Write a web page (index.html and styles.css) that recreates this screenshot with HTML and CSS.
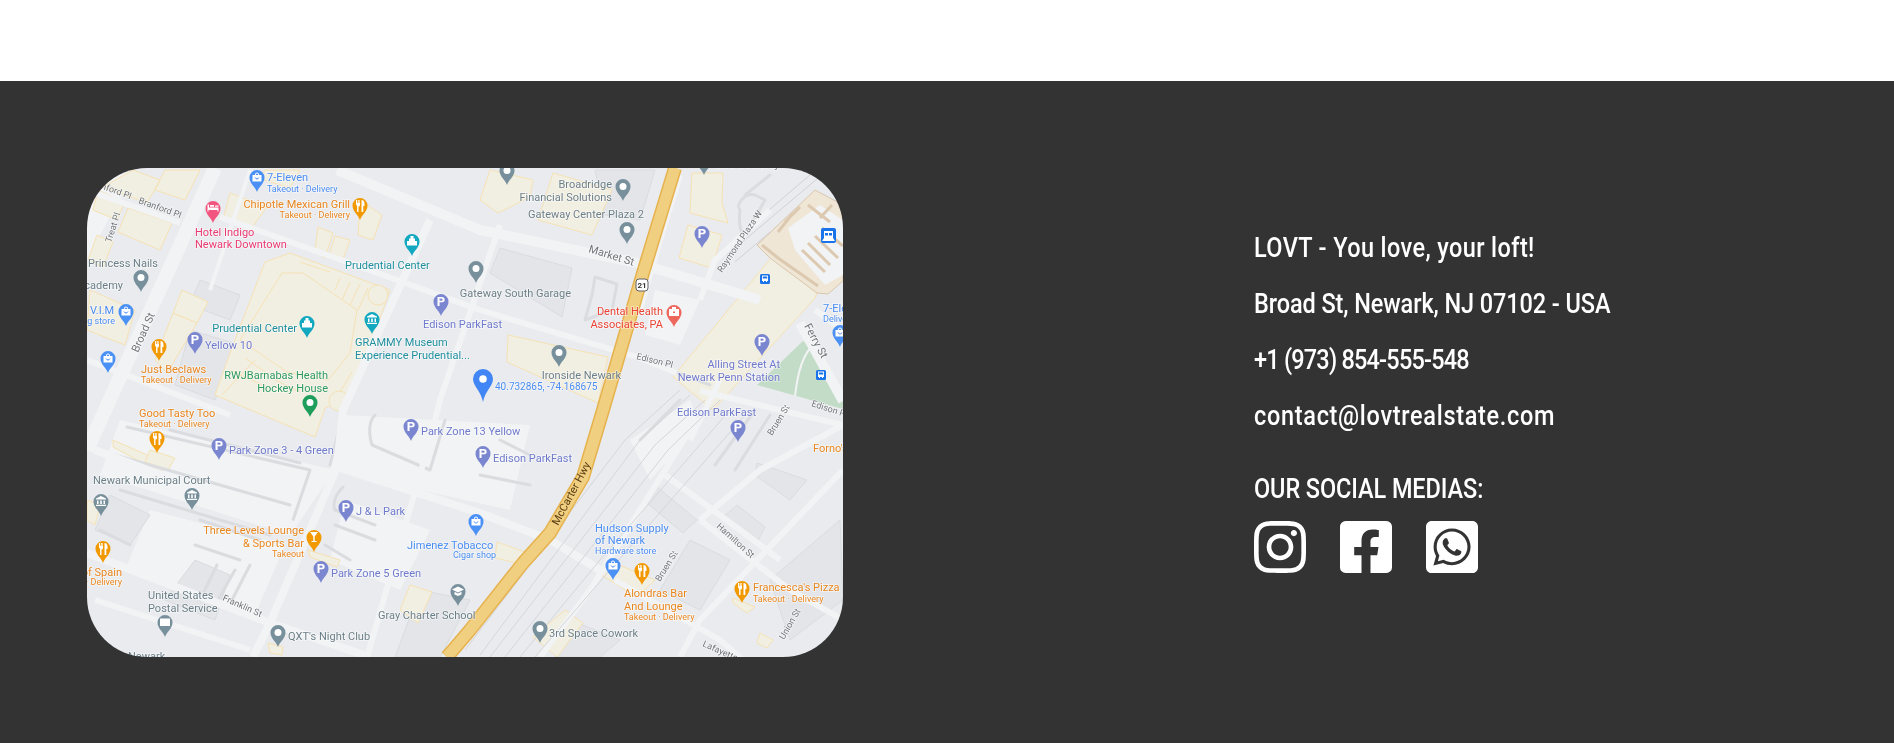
FILE: index.html
```html
<!DOCTYPE html>
<html lang="en">
<head>
<meta charset="utf-8">
<title>LOVT - Contact</title>
<link rel="stylesheet" href="styles.css">
</head>
<body>
<div class="top-space"></div>
<footer class="footer">
  <div class="map">
    <svg class="map-svg" viewBox="87 168 756 489" width="756" height="489" role="img" aria-label="Map of Newark">
      <defs>
        <path id="tear" d="M0 0C-1.500-5-7.500-8.500-7.500-14.500A7.500 7.500 0 1 1 7.500-14.500C7.500-8.500 1.500-5 0 0Z"/>
        <g id="i-dot"><use href="#tear"/><circle class="w" cx="0" cy="-14.500" r="3.500"/></g>
        <g id="i-park"><use href="#tear"/><text class="w pk" x="0" y="-10">P</text></g>
        <g id="i-fork"><use href="#tear"/><path class="w" d="M-4-20h1v3h.7v-3h1v3h.7v-3h.6v5c0 1-.8 1.500-1.500 1.600V-8h-1.400v-6.400C-3.400-14.500-4-15-4-16ZM1.500-20c2 0 3 1.500 3 4v2H3.300v6H1.500Z"/></g>
        <g id="i-bag"><use href="#tear"/><path class="w" d="M-4.500-17H-2.200C-2-20.500 2-20.500 2.200-17H4.500V-10.500H-4.500ZM-1.200-17H1.200C1-19 -1-19 -1.200-17Z"/><path class="st" d="M-2-14.500C-1-12.500 1-12.500 2-14.500"/></g>
        <g id="i-bank"><use href="#tear"/><path class="w" d="M0-20L5-17.500V-16.500H-5V-17.500ZM-4-15.500H-2.500V-12H-4ZM-.8-15.500H.8V-12H-.8ZM2.500-15.500H4V-12H2.500ZM-5-11.200H5V-10H-5Z"/></g>
        <g id="i-tower"><use href="#tear"/><path class="w" d="M-1.500-20H1.500V-17.500H3V-15H5V-10.500H-5V-15H-3V-17.500H-1.500Z"/></g>
        <g id="i-glass"><use href="#tear"/><path class="w" d="M-4-20H4L.7-15.500V-11H2.500V-10H-2.500V-11H-.7V-15.500Z"/></g>
        <g id="i-mail"><use href="#tear"/><path class="w" d="M-5-18.500H5V-11H-5Z"/></g>
        <g id="i-cap"><use href="#tear"/><path class="w" d="M0-19.500L6-16.500 0-13.500-6-16.500ZM-3.500-14.200L0-12.500 3.500-14.200V-11.500L0-10-3.500-11.500Z"/></g>
        <g id="i-bed"><use href="#tear"/><path class="w" d="M-5.500-18.500H-4V-15.500H5.500V-11.500H4.500V-13H-4.500V-11.500H-5.500ZM-3-18H1V-16.200H-3ZM2-17.500H5.500V-16.200H2Z"/></g>
        <g id="i-med"><use href="#tear"/><path class="w" d="M-5-18H-2V-20H2V-18H5V-11H-5ZM-1-15.500V-14H1V-15.500Z"/></g>
        <g id="bus"><rect class="tile" x="-5" y="-5" width="10" height="10" rx="1.500"/><path class="w" d="M-3-3.500H3V2H2V3H1V2H-1V3H-2V2H-3Z"/><rect class="tile" x="-2.200" y="-2.500" width="4.400" height="2"/></g>
      </defs>

      <rect class="ground" x="87" y="168" width="756" height="489"/>

      <!-- light blocks -->
      <path class="light" d="M343 415L530 425 510 510 330 470Z"/>
      <path class="light" d="M120 420L335 470 290 535 100 475Z"/>
      <path class="light" d="M150 510L285 545 255 615 125 570Z"/>
      <path class="light" d="M630 440L690 400 700 425 650 480Z"/>
      <path class="light" d="M655 290L700 300 680 345 645 335Z"/>
      <path class="light" d="M345 500L430 530 400 590 330 560Z"/>
      <path class="light" d="M87 170H135L87 260Z"/>

      <!-- grey buildings -->
      <path class="grey" d="M500 248L572 268 562 317 490 273Z"/>
      <path class="grey" d="M657 487L697 520 683 533 647 503Z"/>
      <path class="grey" d="M757 463L807 480 790 500 755 475Z"/>
      <path class="grey" d="M737 505L765 527 757 543 722 518Z"/>
      <path class="grey" d="M200 280L240 295 230 320 190 305Z"/>
      <path class="grey" d="M190 330L240 345 215 400 175 385Z"/>
      <path class="grey" d="M690 540L730 560 700 610 660 590Z"/>
      <path class="grey" d="M110 495L150 515 130 545 95 530Z"/>
      <path class="grey" d="M195 560L230 575 215 620 165 600Z"/>
      <path class="grey" d="M595 170L655 170 640 220 605 215Z"/>
      <path class="grey" d="M570 620L620 640 600 657 555 657Z"/>
      <path class="grey" d="M420 590L470 600 440 657 395 657Z"/>
      <path class="grey" d="M770 580L840 520 843 600 790 640Z"/>

      <!-- beige buildings -->
      <path class="sand" d="M290 253L390 290 383 310 353 395 325 408 315 437 215 395 230 353 265 262Z"/>
      <path class="sand-line" d="M282 273H303L357 310 350 353 328 380 287 372 240 340Z"/>
      <path class="sand-line" d="M300 262L330 272M340 278L335 290M350 282L342 300M360 284L350 305M368 288L358 310M230 370L262 385M245 358L265 372M275 380L300 392M222 395L255 360M340 392L352 372"/>
      <circle class="sand" cx="378" cy="295" r="10"/>
      <circle class="sand" cx="339" cy="401" r="10"/>
      <path class="sand" d="M133 170L160 180 147 203 103 187Z"/>
      <path class="sand" d="M98 190L125 202 117 220 93 210Z"/>
      <path class="sand" d="M128 208L172 223 160 250 118 232Z"/>
      <path class="sand" d="M97 235L113 242 103 267 88 260Z"/>
      <path class="sand" d="M90 290L135 310 125 345 87 330Z"/>
      <path class="sand" d="M182 290L208 302 197 323 173 313Z"/>
      <path class="sand" d="M173 313L197 323 167 373 155 360Z"/>
      <path class="sand" d="M318 227L333 233 325 258 315 250Z"/>
      <path class="sand" d="M335 236L350 240 342 262 328 258Z"/>
      <path class="sand" d="M360 200L382 215 373 240 358 235Z"/>
      <path class="sand" d="M230 193L267 207 250 230 223 220Z"/>
      <path class="sand" d="M165 170L200 170 185 200 155 190Z"/>
      <path class="sand" d="M265 170L300 170 290 188 258 178Z"/>
      <path class="sand" d="M490 170L533 180 530 197 498 213 480 200Z"/>
      <path class="sand" d="M553 173L612 190 592 235 538 220Z"/>
      <path class="sand" d="M508 335L608 357 598 403 507 362Z"/>
      <path class="sand" d="M692 173L723 173 722 203 728 223 690 213Z"/>
      <path class="sand" d="M688 225L722 235 712 268 679 258Z"/>
      <path class="sand" d="M113 440L170 465 160 472 113 447Z"/>
      <path class="sand" d="M150 450L175 458 168 470 145 462Z"/>
      <path class="sand" d="M308 550L340 560 337 567 310 557Z"/>
      <path class="sand" d="M410 585L432 592 418 623 400 610Z"/>
      <path class="sand" d="M268 643L283 647 282 655 270 653Z"/>
      <path class="sand" d="M607 560L655 580 637 597 598 573Z"/>
      <path class="sand" d="M565 610L583 623 557 657 533 637Z"/>
      <path class="sand" d="M497 542L525 552 517 563 495 558Z"/>
      <path class="sand" d="M733 598L755 607 747 613 733 603Z"/>
      <path class="sand" d="M760 633L773 640 767 648 757 643Z"/>
      <path class="sand" d="M87 500L100 505 95 525 87 520Z"/>

      <!-- Penn Station area -->
      <path class="sand" d="M771 258L673 377 713 410 733 388 815 298 817 293Z"/>
      <path class="park" d="M757 385L803 341 815 350 843 398V409Z"/>
      <path class="road r2" d="M811 347C800 360 797 380 795 396"/>
      <path class="road r10" d="M800 323L843 401"/>
      <path class="road r6" d="M700 391L843 425"/>
      <path class="road r6" d="M815 310L843 330"/>
      <path class="station" d="M815 190L757 245 770 258 817 293 828 294 843 281V205Z"/>
      <path class="light" d="M788 228L820 205 843 220V275L825 285 795 250Z"/>
      <path class="station-line" d="M793 213L778 232M785 222L800 207M762 245L778 258 818 286M808 243L830 265M802 250L825 272M815 236L838 258M822 228L843 246M808 205L830 222M832 205L820 218"/>
      <path class="lane" d="M740 210C735 205 745 192 755 195L765 200 745 235C742 238 738 225 740 210ZM770 175L745 195"/>
      <path class="rail-thin" d="M722 250L810 175M727 255L818 178M735 262L770 232"/>

      <!-- parking lanes -->
      <path class="lane" d="M127 427L310 470 293 520M115 455L290 505M120 490L270 535M170 430L300 463M100 530L130 545"/>
      <path class="lane" d="M375 415C365 425 372 445 372 445L430 470 445 420M340 425L330 465"/>
      <path class="lane" d="M343 487C330 500 335 510 335 510L375 525M335 525L375 540M325 545L350 560"/>
      <path class="lane" d="M217 565L200 600M235 570L218 600M250 565L232 600M200 520L260 540M195 545L240 560"/>
      <path class="lane" d="M595 277L617 284 612 310 585 320 592 295ZM680 400L640 440M670 370L710 385"/>
      <path class="lane" d="M770 415L735 470M755 410L715 465"/>
      <path class="lane" d="M500 440L530 455M480 475L530 485"/>

      <!-- roads -->
      <path class="road r14" d="M215 168L87 450"/>
      <path class="road r10" d="M337 170L480 230 637 263 737 293 760 300"/>
      <path class="road r6" d="M220 217L333 257 480 310 637 357 677 373"/>
      <path class="road r6" d="M87 190L180 223"/>
      <path class="road r8" d="M430 220L343 410 337 467 270 623 253 657"/>
      <path class="road r6" d="M500 225L440 400 430 440 367 657"/>
      <path class="road r8" d="M87 553L270 623 370 657"/>
      <path class="road r8" d="M95 450L293 525"/>
      <path class="road r8" d="M337 467L480 513 550 540 600 570"/>
      <path class="road r6" d="M87 360L230 415"/>
      <path class="road r6" d="M690 430L590 590 540 657"/>
      <path class="road r6" d="M843 470L700 620 680 657"/>
      <path class="road r6" d="M700 520L790 590 843 620"/>
      <path class="road r6" d="M615 580L720 640 740 657"/>
      <path class="road r6" d="M665 475L740 530 780 560"/>
      <path class="road r6" d="M843 425L760 470 700 520"/>
      <path class="road r6" d="M720 380L690 440"/>
      <path class="road r6" d="M680 175L660 240 640 310"/>
      <path class="road r6" d="M770 210L715 260 700 300"/>
      <path class="road r4" d="M250 170L210 290"/>
      <path class="road r6" d="M95 600L250 650"/>

      <!-- rail tracks -->
      <path class="rail" d="M480 655L640 440 690 395M490 657L655 445 705 400M505 657L668 450 720 400M465 650L625 440 680 390M520 657L600 560 730 410M535 657L610 570 745 415"/>

      <!-- highway -->
      <path class="hw-edge" d="M675 168L643 273 603 410 583 477 550 533 523 563 470 630 447 657"/>
      <path class="hw" d="M675 168L643 273 603 410 583 477 550 533 523 563 470 630 447 657"/>

      <!-- shield -->
      <rect class="shield" x="636" y="279" width="12" height="12" rx="3"/>
      <text class="t-shield" x="642" y="288">21</text>

      <!-- road labels -->
      <text class="t-road" transform="translate(588 252) rotate(17)">Market St</text>
      <text class="t-road" transform="translate(138 353) rotate(-66)">Broad St</text>
      <text class="t-road-s" transform="translate(138 203) rotate(20)">Branford Pl</text>
      <text class="t-road-s" transform="translate(88 184) rotate(20)">Branford Pl</text>
      <text class="t-road-s" transform="translate(111 243) rotate(-72)">Treat Pl</text>
      <text class="t-road-s" transform="translate(722 273) rotate(-56)">Raymond Plaza W</text>
      <text class="t-road-s" transform="translate(636 359) rotate(14)">Edison Pl</text>
      <text class="t-road" transform="translate(804 326) rotate(62)">Ferry St</text>
      <text class="t-road-s" transform="translate(811 406) rotate(18)">Edison Pl</text>
      <text class="t-road-s" transform="translate(772 436) rotate(-58)">Bruen St</text>
      <text class="t-road-s" transform="translate(660 582) rotate(-58)">Bruen St</text>
      <text class="t-road-s" transform="translate(716 527) rotate(42)">Hamilton St</text>
      <text class="t-road-s" transform="translate(784 640) rotate(-60)">Union St</text>
      <text class="t-road-s" transform="translate(702 646) rotate(24)">Lafayette St</text>
      <text class="t-road-s" transform="translate(222 600) rotate(24)">Franklin St</text>
      <text class="t-hwy" transform="translate(558 526) rotate(-62)">McCarter Hwy</text>

      <!-- labels -->
      <g class="t-b">
        <text x="267" y="181">7-Eleven</text>
        <text x="90" y="314">V.I.M</text>
        <text x="407" y="549">Jimenez Tobacco</text>
        <text x="595" y="532">Hudson Supply</text>
        <text x="595" y="544">of Newark</text>
        <text x="823" y="312">7-Eleven</text>
      </g>
      <g class="t-b t-sub">
        <text x="267" y="192">Takeout · Delivery</text>
        <text x="115" y="324" class="end">Clothing store</text>
        <text x="453" y="558">Cigar shop</text>
        <text x="595" y="554">Hardware store</text>
        <text x="823" y="322">Delivery</text>
      </g>
      <text class="t-coord" x="495" y="390">40.732865, -74.168675</text>
      <g class="t-o">
        <text x="350" y="208" class="end">Chipotle Mexican Grill</text>
        <text x="141" y="373">Just Beclaws</text>
        <text x="139" y="417">Good Tasty Too</text>
        <text x="304" y="534" class="end">Three Levels Lounge</text>
        <text x="304" y="547" class="end">&amp; Sports Bar</text>
        <text x="122" y="576" class="end">Bar of Spain</text>
        <text x="624" y="597">Alondras Bar</text>
        <text x="624" y="610">And Lounge</text>
        <text x="753" y="591">Francesca's Pizza</text>
        <text x="813" y="452">Forno's</text>
      </g>
      <g class="t-o t-sub">
        <text x="350" y="218" class="end">Takeout · Delivery</text>
        <text x="141" y="383">Takeout · Delivery</text>
        <text x="139" y="427">Takeout · Delivery</text>
        <text x="304" y="557" class="end">Takeout</text>
        <text x="122" y="585" class="end">Takeout · Delivery</text>
        <text x="624" y="620">Takeout · Delivery</text>
        <text x="753" y="602">Takeout · Delivery</text>
      </g>
      <g class="t-k">
        <text x="195" y="236">Hotel Indigo</text>
        <text x="195" y="248">Newark Downtown</text>
      </g>
      <g class="t-t">
        <text x="345" y="269">Prudential Center</text>
        <text x="297" y="332" class="end">Prudential Center</text>
        <text x="355" y="346">GRAMMY Museum</text>
        <text x="355" y="359">Experience Prudential...</text>
      </g>
      <g class="t-gr">
        <text x="328" y="379" class="end">RWJBarnabas Health</text>
        <text x="328" y="392" class="end">Hockey House</text>
      </g>
      <g class="t-r">
        <text x="663" y="315" class="end">Dental Health</text>
        <text x="663" y="328" class="end">Associates, PA</text>
      </g>
      <g class="t-p">
        <text x="205" y="349">Yellow 10</text>
        <text x="423" y="328">Edison ParkFast</text>
        <text x="677" y="416">Edison ParkFast</text>
        <text x="421" y="435">Park Zone 13 Yellow</text>
        <text x="493" y="462">Edison ParkFast</text>
        <text x="229" y="454">Park Zone 3 - 4 Green</text>
        <text x="356" y="515">J &amp; L Park</text>
        <text x="331" y="577">Park Zone 5 Green</text>
        <text x="780" y="368" class="end">Alling Street At</text>
        <text x="780" y="381" class="end">Newark Penn Station</text>
      </g>
      <g class="t-g">
        <text x="88" y="267">Princess Nails</text>
        <text x="123" y="289" class="end">Academy</text>
        <text x="612" y="188" class="end">Broadridge</text>
        <text x="612" y="201" class="end">Financial Solutions</text>
        <text x="644" y="218" class="end">Gateway Center Plaza 2</text>
        <text x="571" y="297" class="end">Gateway South Garage</text>
        <text x="621" y="379" class="end">Ironside Newark</text>
        <text x="93" y="484">Newark Municipal Court</text>
        <text x="378" y="619">Gray Charter School</text>
        <text x="148" y="599">United States</text>
        <text x="148" y="612">Postal Service</text>
        <text x="288" y="640">QXT's Night Club</text>
        <text x="549" y="637">3rd Space Cowork</text>
        <text x="128" y="660">Newark</text>
        <text x="715" y="168">One Gateway Center</text>
      </g>

      <!-- pins -->
      <use class="c-b" href="#i-bag" x="257" y="192"/>
      <use class="c-b" href="#tear" x="238" y="166"/>
      <use class="c-b" href="#i-bag" x="126" y="326"/>
      <use class="c-b" href="#i-bag" x="108" y="373"/>
      <use class="c-b" href="#i-bag" x="476" y="536"/>
      <use class="c-b" href="#i-bag" x="613" y="580"/>
      <use class="c-b" href="#i-bag" x="840" y="347"/>
      <use class="c-o" href="#i-fork" x="360" y="220"/>
      <use class="c-o" href="#i-fork" x="159" y="361"/>
      <use class="c-o" href="#i-fork" x="157" y="453"/>
      <use class="c-o" href="#i-fork" x="103" y="563"/>
      <use class="c-o" href="#i-fork" x="642" y="585"/>
      <use class="c-o" href="#i-fork" x="742" y="603"/>
      <use class="c-o" href="#i-glass" x="314" y="552"/>
      <use class="c-k" href="#i-bed" x="213" y="223"/>
      <use class="c-t" href="#i-tower" x="412" y="256"/>
      <use class="c-t" href="#i-tower" x="307" y="338"/>
      <use class="c-t" href="#i-bank" x="372" y="334"/>
      <use class="c-gr" href="#i-dot" x="310" y="417"/>
      <use class="c-r" href="#i-med" x="674" y="327"/>
      <use class="c-p" href="#i-park" x="195" y="354"/>
      <use class="c-p" href="#i-park" x="441" y="316"/>
      <use class="c-p" href="#i-park" x="702" y="248"/>
      <use class="c-p" href="#i-park" x="762" y="356"/>
      <use class="c-p" href="#i-park" x="738" y="442"/>
      <use class="c-p" href="#i-park" x="411" y="441"/>
      <use class="c-p" href="#i-park" x="483" y="468"/>
      <use class="c-p" href="#i-park" x="219" y="460"/>
      <use class="c-p" href="#i-park" x="346" y="522"/>
      <use class="c-p" href="#i-park" x="321" y="583"/>
      <use class="c-g" href="#i-dot" x="141" y="292"/>
      <use class="c-g" href="#i-dot" x="476" y="283"/>
      <use class="c-g" href="#i-dot" x="507" y="185"/>
      <use class="c-g" href="#i-dot" x="704" y="175"/>
      <use class="c-g" href="#i-dot" x="623" y="201"/>
      <use class="c-g" href="#i-dot" x="627" y="244"/>
      <use class="c-g" href="#i-dot" x="559" y="367"/>
      <use class="c-g" href="#i-bank" x="192" y="510"/>
      <use class="c-g" href="#i-bank" x="101" y="516"/>
      <use class="c-g" href="#i-cap" x="458" y="606"/>
      <use class="c-g" href="#i-mail" x="165" y="637"/>
      <use class="c-g" href="#i-dot" x="278" y="647"/>
      <use class="c-g" href="#i-dot" x="540" y="643"/>
      <use href="#bus" x="765" y="279"/>
      <use href="#bus" x="821" y="375"/>
      <rect class="tile" x="821" y="228" width="15" height="15" rx="2"/>
      <path class="w" d="M824 231H833V238L835 241H822L824 238Z"/>
      <rect class="tile" x="825" y="233" width="3" height="2.500"/>
      <rect class="tile" x="829" y="233" width="3" height="2.500"/>

      <!-- dropped marker -->
      <path class="marker" d="M483 402C481 391 473 386 473 379A10 10 0 1 1 493 379C493 386 485 391 483 402Z"/>
      <circle class="w" cx="483" cy="379" r="3.800"/>
    </svg>
  </div>

  <section class="contact">
    <p class="line line-name">LOVT - You love, your loft!</p>
    <p class="line line-address">Broad St, Newark, NJ 07102 - USA</p>
    <p class="line line-phone">+1 (973) 854-555-548</p>
    <p class="line line-mail">contact@lovtrealstate.com</p>
    <h2 class="social-title">OUR SOCIAL MEDIAS:</h2>
    <div class="social">
      <a class="social-link" href="#" aria-label="Instagram">
        <svg class="social-icon" viewBox="0 32 448 448"><path d="M224.100 141c-63.600 0-114.900 51.300-114.900 114.900s51.300 114.900 114.900 114.900S339 319.500 339 255.900 287.700 141 224.100 141zm0 189.600c-41.100 0-74.700-33.500-74.700-74.700s33.500-74.700 74.700-74.700 74.700 33.500 74.700 74.700-33.600 74.700-74.700 74.700zm146.400-194.300c0 14.900-12 26.800-26.800 26.800-14.900 0-26.800-12-26.800-26.800s12-26.800 26.800-26.800 26.800 12 26.800 26.800zm76.100 27.200c-1.700-35.900-9.900-67.700-36.200-93.900-26.200-26.200-58-34.400-93.900-36.200-37-2.100-147.900-2.100-184.900 0-35.800 1.700-67.600 9.900-93.900 36.100s-34.400 58-36.200 93.900c-2.100 37-2.100 147.900 0 184.900 1.700 35.900 9.900 67.700 36.200 93.900s58 34.400 93.900 36.200c37 2.100 147.900 2.100 184.900 0 35.900-1.700 67.700-9.900 93.900-36.200 26.200-26.200 34.400-58 36.200-93.900 2.100-37 2.100-147.800 0-184.800zM398.800 388c-7.800 19.600-22.900 34.700-42.600 42.600-29.500 11.700-99.500 9-132.100 9s-102.700 2.600-132.100-9c-19.600-7.800-34.700-22.900-42.600-42.600-11.700-29.500-9-99.500-9-132.100s-2.600-102.700 9-132.100c7.800-19.600 22.900-34.700 42.600-42.600 29.500-11.700 99.500-9 132.100-9s102.700-2.600 132.100 9c19.600 7.800 34.700 22.900 42.600 42.600 11.700 29.500 9 99.500 9 132.100s2.700 102.700-9 132.100z"/></svg>
      </a>
      <a class="social-link" href="#" aria-label="Facebook">
        <svg class="social-icon" viewBox="0 32 448 448"><path d="M400 32H48A48 48 0 0 0 0 80v352a48 48 0 0 0 48 48h137.250V327.690h-63V256h63v-54.640c0-62.150 37-96.480 93.670-96.480 27.140 0 55.520 4.840 55.520 4.840v61h-31.270c-30.810 0-40.420 19.120-40.420 38.730V256h68.780l-11 71.690h-57.780V480H400a48 48 0 0 0 48-48V80a48 48 0 0 0-48-48z"/></svg>
      </a>
      <a class="social-link" href="#" aria-label="WhatsApp">
        <svg class="social-icon" viewBox="0 32 448 448"><path d="M224 122.800c-72.700 0-131.800 59.100-131.900 131.800 0 24.900 7 49.200 20.200 70.100l3.100 5-13.300 48.600 49.900-13.100 4.800 2.900c20.200 12 43.400 18.400 67.100 18.400h.1c72.600 0 133.300-59.100 133.300-131.800 0-35.200-15.200-68.300-40.100-93.200-25-25-58-38.700-93.200-38.700zm77.500 188.400c-3.300 9.300-19.100 17.700-26.700 18.800-12.600 1.900-22.400.9-47.500-9.900-39.700-17.200-65.700-57.200-67.700-59.800-2-2.600-16.200-21.500-16.200-41s10.200-29.100 13.900-33.100c3.600-4 7.900-5 10.600-5 2.600 0 5.300 0 7.600.1 2.400.1 5.700-.9 8.900 6.800 3.300 7.900 11.200 27.400 12.200 29.400s1.700 4.300.3 6.900c-7.600 15.200-15.700 14.600-11.600 21.600 15.300 26.300 30.600 35.400 53.900 47.100 4 2 6.300 1.700 8.600-1 2.300-2.600 9.900-11.600 12.500-15.500 2.600-4 5.300-3.300 8.900-2 3.600 1.300 23.100 10.900 27.100 12.900s6.600 3 7.600 4.600c.9 1.900.9 9.900-2.400 19.100zM400 32H48C21.500 32 0 53.500 0 80v352c0 26.500 21.500 48 48 48h352c26.500 0 48-21.500 48-48V80c0-26.500-21.500-48-48-48zM223.900 413.200c-26.600 0-52.700-6.700-75.800-19.300L64 416l22.500-82.200c-13.900-24-21.200-51.300-21.200-79.300C65.400 167.100 136.500 96 223.900 96c42.400 0 82.200 16.500 112.200 46.500 29.900 30 47.900 69.800 47.900 112.200 0 87.400-72.700 158.500-160.100 158.500z"/></svg>
      </a>
    </div>
  </section>
</footer>
</body>
</html>
```

FILE: styles.css
```css
* { box-sizing: border-box; }

html, body { margin: 0; padding: 0; }

body {
  background: #fff;
  font-family: Roboto, "Liberation Sans", sans-serif;
  overflow: hidden;
}

.top-space { height: 81px; background: #fff; }

.footer {
  display: flex;
  align-items: flex-start;
  height: 662px;
  padding: 87px 87px 86px;
  background: #333;
  color: #fff;
}

.map {
  flex: none;
  width: 756px;
  height: 489px;
  border-radius: 60px;
  overflow: hidden;
}

.map-svg { display: block; filter: blur(0.4px); font-family: Roboto, sans-serif; font-size: 11px; }

.contact { margin-left: 411px; padding-top: 52px; }

.line,
.social-title {
  margin: 0;
  font-size: 27px;
  line-height: 56px;
  font-weight: 500;
  white-space: nowrap;
  transform: scaleX(0.87);
  transform-origin: left center;
}

.line-name { letter-spacing: 0.45px; }
.line-address { letter-spacing: -0.1px; }
.line-phone { letter-spacing: -0.9px; }
.line-mail { letter-spacing: 0.8px; }

.social-title { margin-top: 26px; line-height: 38px; letter-spacing: -0.1px; }

.social { display: flex; gap: 34px; margin-top: 13px; }

.social-link { display: block; width: 52px; height: 52px; color: #fff; }

.social-icon { display: block; width: 52px; height: 52px; fill: currentColor; }

/* map fills */
.ground { fill: #e9ebee; }
.light { fill: #f1f3f4; }
.grey { fill: #e3e5e8; stroke: #dadcdf; stroke-width: 1; }
.sand { fill: #f1eee2; stroke: #f6e2b4; stroke-width: 1; }
.sand-line { fill: none; stroke: #f6e2b4; stroke-width: 1; }
.park { fill: #c3dcc7; }
.station { fill: #efe6d6; stroke: #d9c6ad; stroke-width: 1; }
.station-line { fill: none; stroke: #dcc9b0; stroke-width: 3; }
.lane { fill: none; stroke: #dadce0; stroke-width: 3; stroke-linecap: round; stroke-linejoin: round; }
.road { fill: none; stroke: #f1f3f4; stroke-linejoin: round; }
.r2 { stroke-width: 2; }
.r4 { stroke-width: 4; }
.r6 { stroke-width: 6; }
.r8 { stroke-width: 8; }
.r10 { stroke-width: 10; }
.r14 { stroke-width: 14; }
.rail { fill: none; stroke: #d4d6d9; stroke-width: 1; }
.rail-thin { fill: none; stroke: #cfd2d6; stroke-width: 1; }
.hw-edge { fill: none; stroke: #e6b24e; stroke-width: 14; stroke-linejoin: round; }
.hw { fill: none; stroke: #f0cf80; stroke-width: 11; stroke-linejoin: round; }
.shield { fill: #fff; stroke: #5f6368; stroke-width: 1; }
.t-shield { fill: #333; font-size: 8px; font-weight: 700; text-anchor: middle; }

.w { fill: #fff; }
.st { fill: none; stroke: #4285f4; stroke-width: 1; }
.pk { font-size: 13px; font-weight: 700; text-anchor: middle; }
.tile { fill: #1a73e8; }
.marker { fill: #4285f4; }

.c-b { fill: #4a90f5; }
.c-o { fill: #f29900; }
.c-k { fill: #f2557f; }
.c-t { fill: #12a8c0; }
.c-gr { fill: #1e9e5a; }
.c-r { fill: #ee675c; }
.c-p { fill: #7b86d0; }
.c-g { fill: #78909c; }

.end { text-anchor: end; }
.t-sub { font-size: 9px; }
.t-b, .t-o, .t-k, .t-t, .t-gr, .t-r, .t-p, .t-g, .t-coord, .t-road, .t-road-s {
  paint-order: stroke;
  stroke: rgba(255, 255, 255, 0.55);
  stroke-width: 1.500px;
}
.t-b { fill: #4a8cf2; }
.t-o { fill: #e8861f; }
.t-k { fill: #ea3a72; }
.t-t { fill: #1f8f9e; }
.t-gr { fill: #2d9a5e; }
.t-r { fill: #ea4335; }
.t-p { fill: #6f79cc; }
.t-g { fill: #6c7f88; }
.t-coord { fill: #4a8cf2; font-size: 10px; }
.t-road { fill: #70757a; font-size: 11px; }
.t-road-s { fill: #70757a; font-size: 9px; }
.t-hwy { fill: #5a3c12; font-size: 11px; }
```
